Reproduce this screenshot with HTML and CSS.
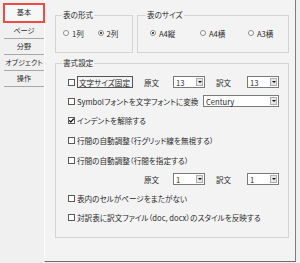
FILE: index.html
```html
<!DOCTYPE html>
<html lang="ja">
<head>
<meta charset="utf-8">
<link rel="stylesheet" href="styles.css">
</head>
<body>
<div class="win">
  <nav class="tabs">
    <div class="tab tab-active">基本</div>
    <div class="tab">ページ</div>
    <div class="tab">分野</div>
    <div class="tab">オブジェクト</div>
    <div class="tab">操作</div>
  </nav>
  <main class="panel">
    <div class="top-row">
      <fieldset class="grp grp-format">
        <legend>表の形式</legend>
        <div class="radios">
          <span class="ritem w35"><span class="radio"></span>1列</span>
          <span class="ritem w35"><span class="radio on"></span>2列</span>
        </div>
      </fieldset>
      <fieldset class="grp grp-size">
        <legend>表のサイズ</legend>
        <div class="radios">
          <span class="ritem w50"><span class="radio on"></span>A4縦</span>
          <span class="ritem w48"><span class="radio"></span>A4横</span>
          <span class="ritem w40"><span class="radio"></span>A3横</span>
        </div>
      </fieldset>
    </div>
    <fieldset class="grp grp-style">
      <legend>書式設定</legend>
      <div class="row r1">
        <span class="cb"></span><span class="lbl focus">文字サイズ固定</span>
        <div class="pair">
          <span class="plbl">原文</span>
          <div class="combo"><span class="cval">13</span><span class="cbtn"><i></i></span></div>
          <span class="plbl second">訳文</span>
          <div class="combo"><span class="cval">13</span><span class="cbtn"><i></i></span></div>
        </div>
      </div>
      <div class="row r2">
        <span class="cb"></span><span class="lbl">Symbolフォントを文字フォントに変換</span>
        <div class="combo wide"><span class="cval">Century</span><span class="cbtn"><i></i></span></div>
      </div>
      <div class="row r3">
        <span class="cb checked"><svg viewBox="0 0 7 7" width="7" height="7"><polyline points="1.2,3.4 2.8,5 5.8,1.6" fill="none" stroke="#111" stroke-width="1.3"/></svg></span><span class="lbl">インデントを解除する</span>
      </div>
      <div class="row r4">
        <span class="cb"></span><span class="lbl">行間の自動調整（行グリッド線を無視する）</span>
      </div>
      <div class="row r5">
        <span class="cb"></span><span class="lbl">行間の自動調整（行間を指定する）</span>
      </div>
      <div class="row r6">
        <div class="pair">
          <span class="plbl">原文</span>
          <div class="combo"><span class="cval">1</span><span class="cbtn"><i></i></span></div>
          <span class="plbl second">訳文</span>
          <div class="combo"><span class="cval">1</span><span class="cbtn"><i></i></span></div>
        </div>
      </div>
      <div class="row r7">
        <span class="cb"></span><span class="lbl">表内のセルがページをまたがない</span>
      </div>
      <div class="row r8">
        <span class="cb"></span><span class="lbl">対訳表に訳文ファイル（doc, docx）のスタイルを反映する</span>
      </div>
    </fieldset>
  </main>
</div>
</body>
</html>
```
FILE: styles.css
```css
* { box-sizing: border-box; }
html, body { margin: 0; padding: 0; }
body {
  width: 300px;
  height: 263px;
  background: #f0f0f0;
  font-family: "Noto Sans CJK JP", "Noto Sans", sans-serif;
  font-size: 7.6px;
  font-feature-settings: "palt";
  color: #2a2a2a;
  overflow: hidden;
}
.win { display: flex; height: 263px; }

/* tabs */
.tabs {
  width: 44px;
  padding-top: 3px;
  display: flex;
  flex-direction: column;
}
.tab {
  height: 16px;
  margin-left: 4px;
  border-bottom: 1px solid #a8a8a8;
  display: flex;
  align-items: center;
  justify-content: center;
  line-height: 1;
  white-space: nowrap;
  font-size: 7.2px;
}
.tab-active {
  height: 20px;
  margin-left: 3px;
  margin-right: -1px;
  border: 2px solid #ee4a46;
  background: #f7f7f7;
  position: relative;
  z-index: 2;
}

/* panel */
.panel {
  width: 252px;
  height: 262px;
  background: #f3f3f3;
  border-left: 1px solid #fbfbfb;
  border-right: 1px solid #7d7d7d;
  border-bottom: 1px solid #6e6e6e;
  padding: 10px 0 0 10px;
}
.top-row { display: flex; gap: 4px; }

.grp {
  margin: 0;
  border: 1px solid #d4d4d4;
  min-width: 0;
}
.grp legend {
  padding: 0 1px;
  line-height: 10px;
  height: 10px;
  white-space: nowrap;
}
.grp-format { width: 78px; height: 43px; padding: 0 0 0 7px; }
.grp-format legend { margin-left: -1px; }
.grp-size { width: 152px; height: 43px; padding: 0 0 0 12px; }
.grp-size legend { margin-left: -4px; }

.radios { display: flex; margin-top: 7px; height: 12px; align-items: center; }
.ritem { display: flex; align-items: center; white-space: nowrap; }
.w35 { width: 35px; }
.w50 { width: 50px; }
.w48 { width: 48px; }
.w40 { width: 40px; }
.radio {
  width: 6px;
  height: 6px;
  border-radius: 50%;
  border: 1px solid #8c8c8c;
  background: #fff;
  margin-right: 3px;
  display: flex;
  align-items: center;
  justify-content: center;
}
.radio.on::after {
  content: "";
  width: 2px;
  height: 2px;
  border-radius: 50%;
  background: #111;
}

.grp-style {
  width: 234px;
  height: 180px;
  margin-top: 5px;
  padding: 0 9px 0 12px;
}
.grp-style legend { margin-left: -6px; }

.row {
  display: flex;
  align-items: center;
  height: 12px;
  white-space: nowrap;
}
.r1 { margin-top: 8px; }
.r2 { margin-top: 7px; }
.r3 { margin-top: 7px; }
.r4 { margin-top: 8px; }
.r5 { margin-top: 8px; }
.r6 { margin-top: 7px; }
.r7 { margin-top: 7px; }
.r8 { margin-top: 7px; }

.cb {
  width: 7px;
  height: 7px;
  border: 1px solid #5a5a5a;
  background: #fff;
  flex: none;
  display: flex;
  align-items: center;
  justify-content: center;
}
.cb svg { display: block; margin: -1px; }
.lbl { margin-left: 2px; }
.focus {
  border: 1px solid #555;
  height: 12px;
  padding: 0 2px 0 1px;
  display: flex;
  align-items: center;
}

.pair { display: flex; align-items: center; margin-left: auto; }
.plbl { width: 29px; }
.plbl.second { width: 31px; margin-left: 11px; }

.combo {
  width: 32px;
  height: 12px;
  border: 1px solid #7a7a7a;
  background: #fff;
  display: flex;
  align-items: stretch;
}
.combo.wide { width: 76px; margin-left: auto; }
.cval { flex: 1; padding-left: 2px; display: flex; align-items: center; }
.cbtn {
  width: 7px;
  margin: 1px;
  border: 1px solid #b0b0b0;
  background: #e6e6e6;
  display: flex;
  align-items: center;
  justify-content: center;
}
.cbtn i {
  display: block;
  width: 0;
  height: 0;
  border-left: 2px solid transparent;
  border-right: 2px solid transparent;
  border-top: 2px solid #111;
}
```
